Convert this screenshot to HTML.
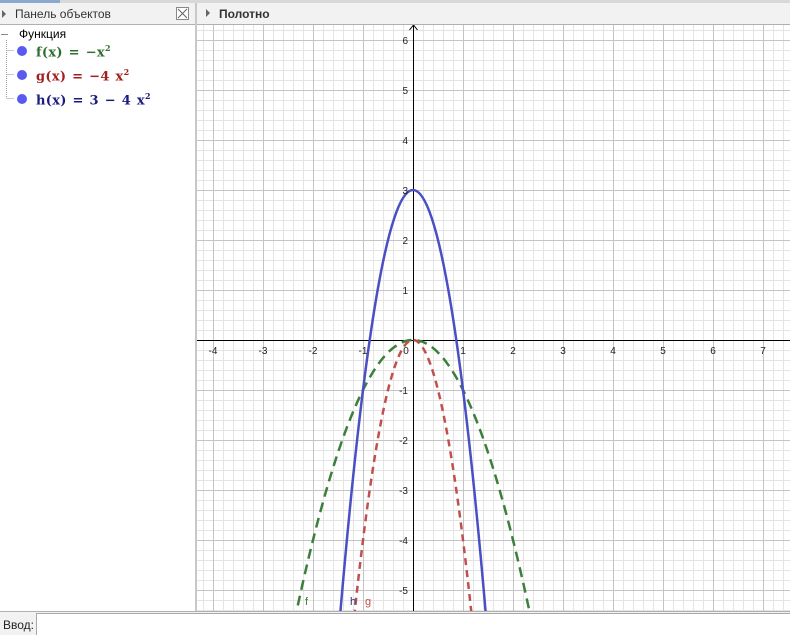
<!DOCTYPE html><html><head><meta charset="utf-8"><style>
body{margin:0;width:790px;height:635px;overflow:hidden;background:#fff;font-family:"Liberation Sans",sans-serif;position:relative}
.t{position:absolute;font-size:12px;color:#000}
.fm{font-weight:bold;font-family:'DejaVu Serif','Liberation Serif',serif;font-size:13px;word-spacing:1px;letter-spacing:0.3px}
</style></head><body>
<svg width="790" height="635" style="position:absolute;left:0;top:0" font-family="Liberation Sans, sans-serif">
<defs>
<pattern id="mn" width="10" height="10" patternUnits="userSpaceOnUse" x="3" y="0"><path d="M0.5 0V10M0 0.5H10" stroke="#e4e4e4" stroke-width="1"/></pattern>
<pattern id="mj" width="50" height="50" patternUnits="userSpaceOnUse" x="13" y="40"><path d="M0.5 0V50M0 0.5H50" stroke="#c4c4c4" stroke-width="1"/></pattern>
<clipPath id="cv"><rect x="197" y="25" width="593" height="586"/></clipPath>
</defs>
<rect x="0" y="0" width="790" height="3" fill="#d8d8d8"/>
<rect x="0" y="0" width="60" height="3" fill="#8aa8d0"/>
<rect x="0" y="3" width="195" height="22" fill="#f2f2f2"/>
<line x1="0" y1="24.5" x2="195" y2="24.5" stroke="#b0b0b0"/>
<path d="M2 10l4 4-4 4z" fill="#666"/>
<rect x="176.5" y="7.5" width="12" height="12" fill="#fff" stroke="#888"/>
<path d="M178 9l9 9M187 9l-9 9" stroke="#666"/>
<rect x="195" y="3" width="2" height="609" fill="#c8c8c8"/>
<rect x="197" y="3" width="593" height="22" fill="#f2f2f2"/>
<line x1="197" y1="24.5" x2="790" y2="24.5" stroke="#b0b0b0"/>
<path d="M206 9l4 4-4 4z" fill="#666"/>
<g clip-path="url(#cv)">
<rect x="197" y="25" width="593" height="586" fill="url(#mn)"/>
<rect x="197" y="25" width="593" height="586" fill="url(#mj)"/>
<line x1="197" y1="340.5" x2="790" y2="340.5" stroke="#000"/>
<line x1="413.5" y1="25" x2="413.5" y2="611" stroke="#000"/>
<path d="M409.5 30l4-5 4 5" fill="none" stroke="#000"/>
<path d="M288 652.5Q413 27.5 538 652.5" fill="none" stroke="#3c7f3c" stroke-width="2.5" stroke-dasharray="10,6"/>
<path d="M350.5 652.5Q413 27.5 475.5 652.5" fill="none" stroke="#c0504d" stroke-width="2.5" stroke-dasharray="7,5"/>
<path d="M338 640Q413 -260 488 640" fill="none" stroke="#4a4fc4" stroke-width="2.5"/>
<g font-size="10" fill="#222" text-anchor="middle">
<text x="213" y="354">-4</text><text x="263" y="354">-3</text><text x="313" y="354">-2</text><text x="363" y="354">-1</text>
<text x="406" y="354">0</text><text x="463" y="354">1</text><text x="513" y="354">2</text><text x="563" y="354">3</text>
<text x="613" y="354">4</text><text x="663" y="354">5</text><text x="713" y="354">6</text><text x="763" y="354">7</text>
</g>
<g font-size="10" fill="#222" text-anchor="end">
<text x="408" y="44">6</text><text x="408" y="94">5</text><text x="408" y="144">4</text><text x="408" y="194">3</text>
<text x="408" y="244">2</text><text x="408" y="294">1</text><text x="408" y="394">-1</text><text x="408" y="444">-2</text>
<text x="408" y="494">-3</text><text x="408" y="544">-4</text><text x="408" y="594">-5</text>
</g>
<text x="305" y="605" font-size="11" fill="#3c7f3c">f</text>
<text x="350" y="605" font-size="11" fill="#2a2a90">h</text>
<text x="365" y="605" font-size="11" fill="#c0504d">g</text>
</g>
<path d="M6.5 38V98M6.5 50.5H14M6.5 74.5H14M6.5 98.5H14" stroke="#999" stroke-dasharray="1,1" fill="none"/>
<rect x="0" y="30" width="9" height="9" fill="#fff"/><line x1="1" y1="34.5" x2="8" y2="34.5" stroke="#888"/>
<circle cx="22" cy="51" r="5" fill="#5a5af0"/><circle cx="22" cy="75" r="5" fill="#5a5af0"/><circle cx="22" cy="99" r="5" fill="#5a5af0"/>
<rect x="0" y="611" width="790" height="24" fill="#f2f2f2"/>
<line x1="0" y1="611.5" x2="790" y2="611.5" stroke="#b0b0b0"/>
<rect x="36.5" y="613.5" width="760" height="22" fill="#fff" stroke="#a8a8a8"/>
</svg>
<div class="t" style="left:15px;top:7px;color:#333">Панель объектов</div>
<div class="t" style="left:219px;top:7px;font-weight:bold;color:#333">Полотно</div>
<div class="t" style="left:19px;top:27px">Функция</div>
<div class="t fm" style="left:36px;top:43px;color:#2e6e2e">f(x) = −x<sup style="font-size:8px">2</sup></div>
<div class="t fm" style="left:36px;top:67px;color:#a02020">g(x) = −4 x<sup style="font-size:8px">2</sup></div>
<div class="t fm" style="left:36px;top:91px;color:#1a1a80">h(x) = 3 − 4 x<sup style="font-size:8px">2</sup></div>
<div class="t" style="left:3px;top:618px;color:#222">Ввод:</div>
</body></html>
